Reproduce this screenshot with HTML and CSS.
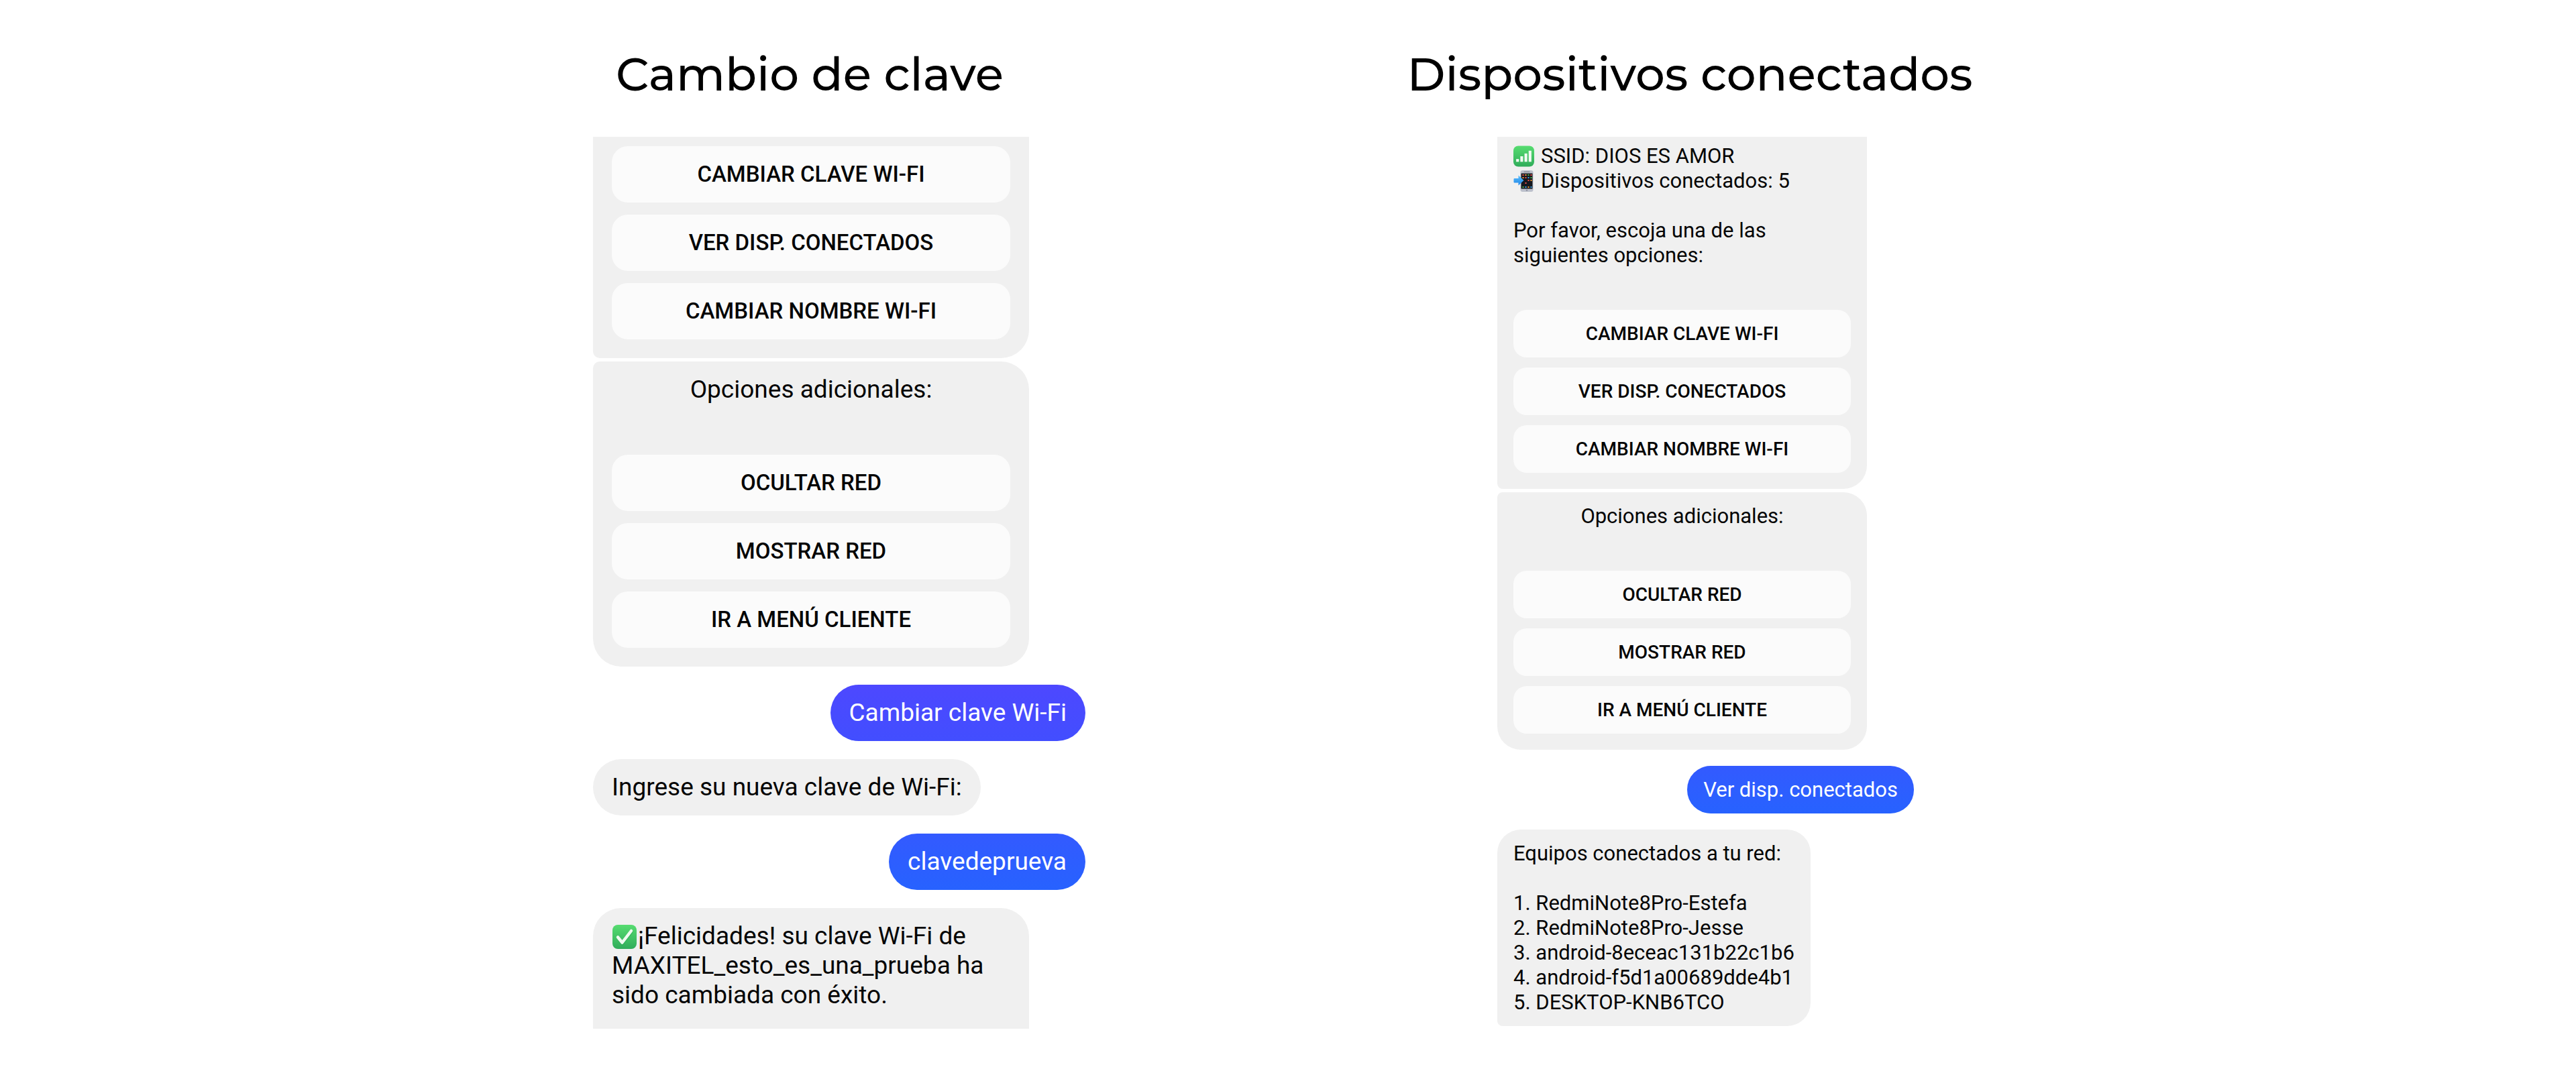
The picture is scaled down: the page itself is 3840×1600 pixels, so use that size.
FILE: index.html
```html
<!DOCTYPE html>
<html lang="es">
<head>
<meta charset="utf-8">
<meta name="viewport" content="width=device-width, initial-scale=1">
<title>Cambio de clave y dispositivos conectados</title>
<link rel="stylesheet" href="styles.css">
</head>
<body>
<main class="board">
  <section class="demo demo-password">
    <h1 class="title">Cambio de clave</h1>
    <div class="chat chat-large">
      <div class="bubble received card card-cut">
        <div class="options">
          <button class="option" type="button">CAMBIAR CLAVE WI-FI</button>
          <button class="option" type="button">VER DISP. CONECTADOS</button>
          <button class="option" type="button">CAMBIAR NOMBRE WI-FI</button>
        </div>
      </div>
      <div class="bubble received card card-last">
        <p class="card-heading">Opciones adicionales:</p>
        <div class="options">
          <button class="option" type="button">OCULTAR RED</button>
          <button class="option" type="button">MOSTRAR RED</button>
          <button class="option" type="button">IR A MENÚ CLIENTE</button>
        </div>
      </div>
      <p class="bubble sent sent-violet">Cambiar clave Wi-Fi</p>
      <p class="bubble received">Ingrese su nueva clave de Wi-Fi:</p>
      <p class="bubble sent">clavedeprueva</p>
      <p class="bubble received result"><svg class="emoji" viewBox="0 0 36 36" role="img" aria-label="Listo"><defs><linearGradient id="green" x1="0" y1="0" x2="0" y2="1"><stop offset="0" stop-color="#56dc70"/><stop offset="1" stop-color="#30ac5a"/></linearGradient></defs><rect width="36" height="36" rx="8" fill="url(#green)"/><path d="M8.500 19l6 8L28.500 9.500" fill="none" stroke="#2da455" stroke-width="5" stroke-linecap="round" stroke-linejoin="round" opacity=".4" transform="translate(0 1)"/><path d="M8 18.500l6.500 8L28 9" fill="none" stroke="#effaf0" stroke-width="4.500" stroke-linecap="round" stroke-linejoin="round"/></svg>¡Felicidades! su clave Wi-Fi de MAXITEL_esto_es_una_prueba ha sido cambiada con éxito.</p>
    </div>
  </section>

  <section class="demo demo-devices">
    <h1 class="title">Dispositivos conectados</h1>
    <div class="chat chat-small">
      <div class="bubble received card card-cut">
        <div class="intro">
          <p class="info"><svg class="emoji" viewBox="0 0 30 30" role="img" aria-label="Señal"><rect width="30" height="30" rx="7" fill="url(#green)"/><g fill="#f2fbf3"><rect x="4" y="19" width="4" height="4"/><rect x="10" y="15" width="4" height="8"/><rect x="16" y="11" width="4" height="12"/><rect x="22" y="7" width="4" height="16"/></g></svg>SSID: DIOS ES AMOR</p>
          <p class="info"><svg class="emoji" viewBox="0 0 30 32" role="img" aria-label="Teléfono"><defs><linearGradient id="arrow" x1="0" y1="0" x2="0" y2="1"><stop offset="0" stop-color="#5ec0fa"/><stop offset="1" stop-color="#1b83e8"/></linearGradient></defs><rect x="10" y="0" width="19" height="32" rx="3" fill="#bcc0cb"/><rect x="15" y="1.500" width="9" height="1.500" rx="0.700" fill="#8c909c"/><rect x="11" y="4.500" width="17" height="23" fill="#15181f"/><circle cx="19.500" cy="29.700" r="1.300" fill="#9195a3"/><g><path d="M13 6h2v2h-2zM25 6h2v2h-2zM17 10h2v2h-2zM21 14h2v2h-2zM17 18h2v2h-2z" fill="#f0524b"/><path d="M17 6h2v2h-2zM25 14h2v2h-2zM13 10h2v2h-2zM21 24h2v2h-2z" fill="#f29a38"/><path d="M21 6h2v2h-2zM25 10h2v2h-2zM13 24h2v2h-2z" fill="#52b54b"/><path d="M21 10h2v2h-2zM17 24h2v2h-2zM25 24h2v2h-2z" fill="#3ea4e8"/></g><path d="M1 12h6V7.500L15 15l-8 7.500V18.500H1q-1 0-1-1V13q0-1 1-1z" fill="url(#arrow)"/></svg>Dispositivos conectados: 5</p>
          <p class="prompt">Por favor, escoja una de las siguientes opciones:</p>
        </div>
        <div class="options">
          <button class="option" type="button">CAMBIAR CLAVE WI-FI</button>
          <button class="option" type="button">VER DISP. CONECTADOS</button>
          <button class="option" type="button">CAMBIAR NOMBRE WI-FI</button>
        </div>
      </div>
      <div class="bubble received card card-last">
        <p class="card-heading">Opciones adicionales:</p>
        <div class="options">
          <button class="option" type="button">OCULTAR RED</button>
          <button class="option" type="button">MOSTRAR RED</button>
          <button class="option" type="button">IR A MENÚ CLIENTE</button>
        </div>
      </div>
      <p class="bubble sent">Ver disp. conectados</p>
      <div class="bubble received devices">
        <p>Equipos conectados a tu red:</p>
        <ol class="device-list">
          <li>RedmiNote8Pro-Estefa</li>
          <li>RedmiNote8Pro-Jesse</li>
          <li>android-8eceac131b22c1b6</li>
          <li>android-f5d1a00689dde4b1</li>
          <li>DESKTOP-KNB6TCO</li>
        </ol>
      </div>
    </div>
  </section>
</main>
</body>
</html>
```

FILE: styles.css
```css
* {
  box-sizing: border-box;
}

body {
  margin: 0;
  background: #fff;
  color: #050505;
  font-family: Roboto, "Liberation Sans", sans-serif;
}

p,
ol {
  margin: 0;
  padding: 0;
}

.board {
  display: grid;
  grid-template-columns: 551fr 1312fr 1312fr 665fr;
  padding: 68px 0 48px;
}

.demo {
  display: flex;
  flex-direction: column;
  align-items: center;
  gap: 52px;
}

.demo-password {
  grid-column: 2;
}

.demo-devices {
  grid-column: 3;
}

.title {
  margin: 0;
  color: #000;
  font: 500 69px/84px Montserrat, Inter, sans-serif;
}

.chat {
  display: flex;
  flex-direction: column;
  align-items: flex-start;
  gap: var(--gap);
  max-width: 100%;
  font-size: var(--text);
  line-height: var(--line);
}

.chat-large {
  --text: 37px;
  --line: 44px;
  --label: 33px;
  --gap: 27px;
  --pad-x: 28px;
  --pad-y: 20px;
  --card-end: 28px;
  --radius: 42px;
  --small-radius: 10px;
  --option-height: 84px;
  --option-gap: 18px;
  --option-radius: 24px;
  --heading-gap: 75px;
  --card-width: 650px;
  width: 734px;
  margin-left: 88px;
}

.chat-small {
  --text: 31px;
  --line: 37px;
  --label: 28px;
  --gap: 24px;
  --pad-x: 24px;
  --pad-y: 17px;
  --card-end: 24px;
  --radius: 35px;
  --small-radius: 8px;
  --option-height: 71px;
  --option-gap: 15px;
  --option-radius: 20px;
  --heading-gap: 63px;
  --card-width: 551px;
  width: 621px;
  margin-left: 47px;
}

.bubble {
  padding: var(--pad-y) var(--pad-x);
  border-radius: var(--radius);
}

.received {
  background: #f0f0f0;
}

.sent {
  align-self: flex-end;
  background: linear-gradient(#335aff, #2762ff);
  color: #fff;
}

.sent-violet {
  background: linear-gradient(#4d48ff, #424eff);
}

.card {
  display: flex;
  flex-direction: column;
  gap: var(--heading-gap);
  width: var(--card-width);
  max-width: 100%;
  padding-bottom: var(--card-end);
}

.card-cut {
  padding-top: 14px;
  border-radius: 0 0 var(--radius) var(--small-radius);
}

.chat-small .card-cut {
  padding-top: 10px;
}

.card-last {
  margin-top: calc(5px - var(--gap));
  border-top-left-radius: var(--small-radius);
}

.card-heading {
  text-align: center;
}

.options {
  display: flex;
  flex-direction: column;
  gap: var(--option-gap);
}

.option {
  height: var(--option-height);
  padding: 0 16px;
  border: 0;
  border-radius: var(--option-radius);
  background: #fbfbfb;
  color: #050505;
  font: 500 var(--label)/var(--line) Roboto, "Liberation Sans", sans-serif;
}

.result {
  width: var(--card-width);
  max-width: 100%;
  padding-bottom: 28px;
  border-radius: var(--radius) var(--radius) 0 0;
}

.result .emoji {
  width: 36px;
  height: 36px;
  margin: 0 2px 0 1px;
  vertical-align: -7px;
}

.info {
  display: flex;
  align-items: center;
  gap: 10px;
}

.info .emoji {
  width: 31px;
  height: 32px;
}

.prompt {
  max-width: 440px;
  margin-top: var(--line);
}

.devices {
  border-bottom-left-radius: var(--small-radius);
}

.device-list {
  margin-top: var(--line);
  list-style-position: inside;
}
```
